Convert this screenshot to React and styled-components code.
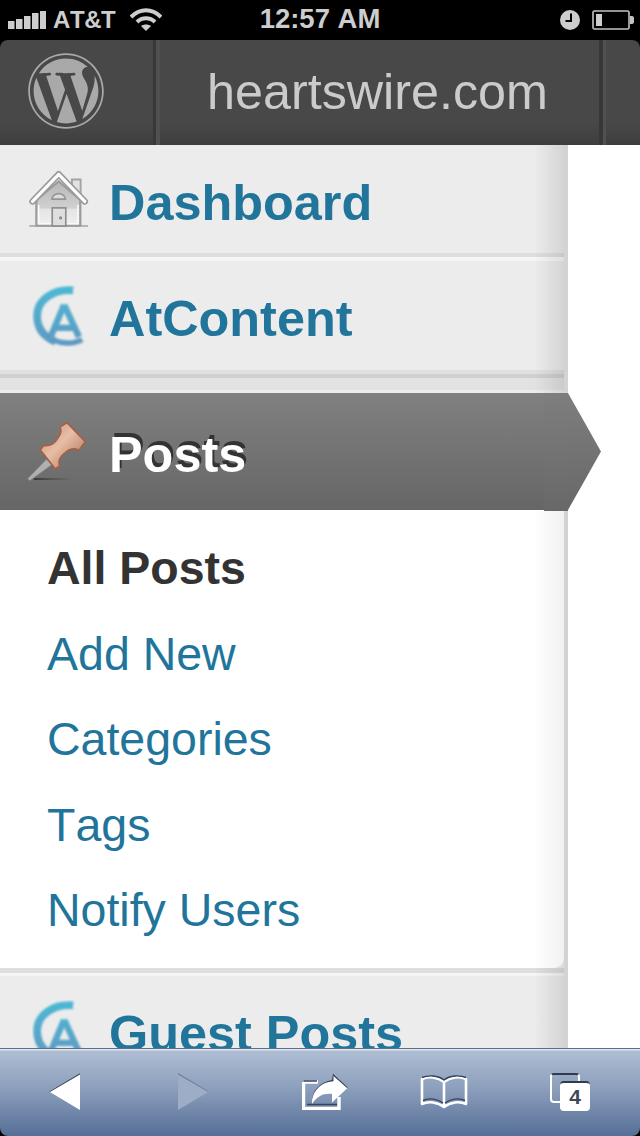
import React from "react";
import styled, { createGlobalStyle } from "styled-components";
import { FaWordpress } from "react-icons/fa";

const Global = createGlobalStyle`
  html, body { margin: 0; padding: 0; background: #000; }
  body { font-family: "Liberation Sans", Arial, sans-serif; font-kerning: none; }
`;

const Page = styled.div`
  width: 640px; height: 1136px; display: flex; flex-direction: column;
  overflow: hidden; background: #000; position: relative;
`;

const StatusBar = styled.div`
  height: 40px; flex: none; display: grid; grid-template-columns: 1fr auto 1fr; align-items: center;
  padding: 0 6px 0 8px; background: #000; color: #cdcdcd; box-sizing: border-box;
`;
const StatusLeft = styled.div`display: flex; align-items: center;`;
const StatusRight = styled.div`display: flex; align-items: center; justify-content: flex-end; gap: 12px;`;
const Carrier = styled.span`font-size: 24px; font-weight: 700; margin: 0 15px 0 7px; letter-spacing: -0.4px;`;
const Clock = styled.span`font-size: 27.5px; font-weight: 700; position: relative; left: -1px; top: -1px;`;

const Header = styled.header`
  height: 105px; flex: none; display: flex; border-radius: 8px 8px 0 0; overflow: hidden;
  background: linear-gradient(#484848 0, #484848 80%, #3d3d3d 100%);
`;
const LogoCell = styled.div`
  width: 153px; flex: none; display: flex; align-items: center; justify-content: center;
  color: #a9a9a9; padding-right: 21px; padding-bottom: 4px; box-sizing: border-box;
`;
const Sep = styled.div`
  width: 7px; flex: none; background: linear-gradient(90deg, #373737 0, #373737 50%, #505050 50%, #505050 100%);
`;
const Site = styled.div`
  flex: 1; display: flex; align-items: center; justify-content: center;
  font-size: 50.3px; color: #cbcbcb; padding-right: 4px; padding-bottom: 2px;
`;
const EndCell = styled.div`width: 34px; flex: none;`;

const Body = styled.div`flex: 1; min-height: 0; display: flex; background: #fff; overflow: hidden;`;
const Sidebar = styled.nav`
  width: 568px; flex: none; box-sizing: border-box; border-right: 4px solid #d3d3d3;
  background: #fff; display: flex; flex-direction: column;
`;

const fade = "linear-gradient(90deg, rgba(0,0,0,0) 0, rgba(0,0,0,0) calc(100% - 30px), rgba(0,0,0,.1) 100%)";

const Row = styled.div`
  height: ${p => p.$h}px; flex: none; box-sizing: border-box; display: flex; align-items: center;
  padding-left: 28px; gap: 19px; position: relative;
  background: ${fade}, #ececec;
`;
const RowLabel = styled.span`font-size: 50.4px; font-weight: 700; color: #21759b; position: relative; top: ${p => p.$top || 0}px;`;
const Rule = styled.div`height: ${p => p.$h}px; flex: none; background: ${fade}, ${p => p.$c};`;

const ActiveRow = styled.div`
  height: 117px; flex: none; margin-right: -4px; display: flex; align-items: center;
  padding-left: 27px; gap: 22px; position: relative;
  background: linear-gradient(#808080, #666);
  &::before {
    content: ""; position: absolute; right: 0; top: 0; width: 24px; height: 118px;
    background: linear-gradient(#7e7e7e, #686868);
  }
  &::after {
    content: ""; position: absolute; left: 100%; top: 0; width: 33px; height: 117px;
    background: linear-gradient(#7e7e7e, #686868);
    clip-path: polygon(0 0, 100% 50%, 0 100%);
  }
`;
const ActiveLabel = styled.span`
  font-size: 50.4px; font-weight: 700; color: #fff; text-shadow: 2px -4px 0 #333; position: relative; top: 3px;
`;

const Submenu = styled.ul`
  list-style: none; margin: 0; padding: 16px 0 0 47px; height: 458px; flex: none; box-sizing: border-box;
  border-bottom-right-radius: 10px;
  background: linear-gradient(90deg, #fff 0, #fff calc(100% - 30px), #f1f1f1 100%);
`;
const SubItem = styled.li`
  height: 85.5px; line-height: 85.5px; font-size: 46.5px;
  font-weight: ${p => p.$current ? 700 : 400}; color: ${p => p.$current ? "#333" : "#21759b"};
`;
const SubWrap = styled.div`flex: none; background: #ddd;`;

const Toolbar = styled.footer`
  height: 88px; flex: none; box-sizing: border-box; display: flex; align-items: center; padding: 0 0 2px 49px;
  border-top: 1px solid #5c6f8c; border-radius: 0 0 8px 8px; position: relative;
  background: linear-gradient(#dfe5ed 0, #dfe5ed 1px, #aebdd3 2px, #8c9fbc 45%, #566f97 100%);
`;
const NavIcon = styled.span`display: flex; flex: none; margin-left: ${p => p.$gap || 0}px;`;
const Tabs = styled.span`display: block; width: 40px; height: 38px; position: relative; flex: none; margin-left: 82px;`;
const TabBack = styled.span`
  position: absolute; left: 0; top: 0; width: 30px; height: 30px; box-sizing: border-box;
  border: 2.5px solid #fff; border-top-color: #2f3b4f; border-radius: 4px;
`;
const TabBadge = styled.span`
  position: absolute; left: 10px; top: 8px; width: 30px; height: 30px; background: #fff; border-radius: 4px;
  border-top: 2px solid #2f3b4f; box-sizing: border-box; color: #3d4759; font-size: 21px; font-weight: 700;
  display: flex; align-items: center; justify-content: center;
`;

const Signal = () => (
  <svg width="38" height="18" viewBox="0 0 38 18" fill="#cdcdcd">
    <rect x="0" y="10" width="6.5" height="8" /><rect x="8" y="8" width="6.5" height="10" />
    <rect x="16" y="5" width="6.5" height="13" /><rect x="24" y="2" width="6.5" height="16" />
    <rect x="32" y="0" width="6" height="18" />
  </svg>
);
const Wifi = () => (
  <svg width="32" height="24" viewBox="0 0 32 24" fill="none" stroke="#cdcdcd" strokeWidth="4">
    <path d="M1 9 C10 0 22 0 31 9" /><path d="M7 14 C12 9 20 9 25 14" />
    <path d="M16 23 L11 18 C14 16 18 16 21 18 Z" fill="#cdcdcd" stroke="none" />
  </svg>
);
const ClockIcon = () => (
  <svg width="20" height="20" viewBox="0 0 20 20">
    <circle cx="10" cy="10" r="10" fill="#cdcdcd" />
    <path d="M11 3.5 V11 H5.5" fill="none" stroke="#000" strokeWidth="2" />
  </svg>
);
const Battery = () => (
  <svg width="42" height="20" viewBox="0 0 42 20" fill="none">
    <rect x="1" y="1" width="36" height="18" rx="1.5" stroke="#c4c4c4" strokeWidth="1.6" />
    <path d="M38 6 h2 a2 2 0 0 1 2 2 v4 a2 2 0 0 1 -2 2 h-2 z" fill="#c4c4c4" />
    <rect x="4" y="4" width="6" height="12" fill="#cdcdcd" />
  </svg>
);

const House = () => (
  <svg width="62" height="60" viewBox="80 70 192 185" style={{ display: "block", flex: "none" }}>
    <defs>
      <linearGradient id="hw" x1="0" y1="0" x2="0" y2="1">
        <stop offset="0" stopColor="#b8b8b8" /><stop offset=".6" stopColor="#d0d0d0" /><stop offset=".63" stopColor="#e4e4e4" /><stop offset="1" stopColor="#f0f0f0" />
      </linearGradient>
      <filter id="hb"><feGaussianBlur stdDeviation="1.2" /></filter>
    </defs>
    <g filter="url(#hb)">
      <rect x="84" y="243" width="182" height="6" fill="#b4b4b4" />
      <path d="M216 102 H243 V150 H216 Z" fill="#e2e2e2" stroke="#a4a4a4" strokeWidth="6" />
      <path d="M106 165 L175 108 L242 165 V245 H106 Z" fill="url(#hw)" stroke="#9c9c9c" strokeWidth="7" />
      <path d="M113 180 V239 H235 V180" fill="none" stroke="#fafafa" strokeWidth="5" />
      <path d="M94 170 L175 86 L256 170" fill="none" stroke="#9a9a9a" strokeWidth="20" strokeLinejoin="round" strokeLinecap="round" />
      <path d="M94 170 L175 86 L256 170" fill="none" stroke="#fdfdfd" strokeWidth="10" strokeLinejoin="round" strokeLinecap="round" />
      <path d="M154 163 A21 17 0 0 1 196 163 Z" fill="#dcdcdc" stroke="#959595" strokeWidth="5" />
      <rect x="155" y="190" width="42" height="56" fill="#dedede" stroke="#8c8c8c" strokeWidth="5" />
      <circle cx="181" cy="221" r="5" fill="#8c8c8c" />
    </g>
  </svg>
);
const AtIcon = ({ id }) => (
  <svg width="54" height="62" viewBox="92 430 168 190" style={{ display: "block", flex: "none", margin: "0 4px 0 4px" }}>
    <defs>
      <linearGradient id={id} gradientUnits="userSpaceOnUse" x1="0" y1="435" x2="0" y2="615">
        <stop offset="0" stopColor="#4db8d4" /><stop offset="1" stopColor="#5f99c2" />
      </linearGradient>
      <filter id={id + "b"} x="-20%" y="-20%" width="140%" height="140%"><feGaussianBlur stdDeviation="3.5" /></filter>
    </defs>
    <g fill="none" stroke={`url(#${id})`} filter={`url(#${id}b)`}>
      <path d="M220 445 C165 440 108 470 108 525 C108 565 130 590 165 605" strokeWidth="24" />
      <path d="M192 490 L152 585 M192 490 L238 590 M160 562 H222" strokeWidth="20" />
      <path d="M150 592 C175 615 225 612 248 598" strokeWidth="17" />
    </g>
  </svg>
);
const Pin = () => (
  <svg width="60" height="63" viewBox="80 150 180 189" style={{ display: "block", flex: "none" }}>
    <defs>
      <linearGradient id="pg" x1="0" y1="0" x2="1" y2="1">
        <stop offset="0" stopColor="#c98a6c" /><stop offset=".45" stopColor="#e8bda6" /><stop offset="1" stopColor="#a9674c" />
      </linearGradient>
      <linearGradient id="ps" x1="0" y1="0" x2="1" y2="0">
        <stop offset="0" stopColor="#333" stopOpacity=".9" /><stop offset="1" stopColor="#444" stopOpacity="0" />
      </linearGradient>
      <filter id="pb"><feGaussianBlur stdDeviation="1" /></filter>
    </defs>
    <g filter="url(#pb)">
      <rect x="100" y="324" width="118" height="6" rx="3" fill="url(#ps)" />
      <path d="M138 268 L82 326 L88 332 L158 282 Z" fill="#b0b0b0" stroke="#7c7c7c" strokeWidth="2" />
      <path d="M200 158 L255 215 L236 241 C222 232 205 238 195 248 C182 258 172 268 178 288 L165 297 L120 240 L130 226 C150 230 165 218 172 205 C182 192 186 182 178 172 Z"
        fill="url(#pg)" stroke="#a0604a" strokeWidth="5" strokeLinejoin="round" />
    </g>
  </svg>
);

const Back = () => (
  <svg width="31" height="37" viewBox="0 0 31 37">
    <path d="M31 0 L0 18.5 L31 37 Z" fill="#fff" />
    <path d="M31 0 L0 18.5 L1 19 L31 1.5 Z" fill="#3a465c" />
  </svg>
);
const Forward = () => (
  <svg width="31" height="37" viewBox="0 0 31 37">
    <path d="M0 0 L31 18.5 L0 37 Z" fill="#9dadc6" />
    <path d="M0 0 L31 18.5 L30 19 L0 1.5 Z" fill="#6f809c" />
  </svg>
);
const Share = () => (
  <svg width="46" height="37" viewBox="0 0 46 37">
    <path d="M1.5 9 H16 M1.5 9 V35.5 H37 V24" fill="none" stroke="#fff" strokeWidth="3.4" />
    <path d="M1.5 8 H15 M5 31.5 H35" fill="none" stroke="#36425a" strokeWidth="1.5" />
    <path d="M31 0.5 L46 14.5 L30 29.5 V21 C22 20 15 23 10 31 C10 18 18 9 31 8.5 Z" fill="#fff" />
    <path d="M31 0.5 L46 14.5 L45 15 L31.5 3 V8 C20 9 12 16 10 27 C11 16 19 9 30 7 Z" fill="#36425a" />
  </svg>
);
const Book = () => (
  <svg width="48" height="34" viewBox="0 0 48 34" fill="none">
    <path d="M24 7 C18 2 8 1 2 4 V29 C8 26 18 27 24 32 C30 27 40 26 46 29 V4 C40 1 30 2 24 7 Z M24 7 V32" stroke="#fff" strokeWidth="2.6" strokeLinejoin="round" />
    <path d="M2 2.5 C8 0 18 0 24 5 C30 0 40 0 46 2.5 M3 25.5 C9 22.5 18 24 23 28 M45 25.5 C39 22.5 30 24 25 28" stroke="#36425a" strokeWidth="1.4" />
  </svg>
);

export default function App() {
  return (
    <Page>
      <Global />
      <StatusBar>
        <StatusLeft>
          <Signal />
          <Carrier>AT&amp;T</Carrier>
          <Wifi />
        </StatusLeft>
        <Clock>12:57 AM</Clock>
        <StatusRight>
          <ClockIcon />
          <Battery />
        </StatusRight>
      </StatusBar>
      <Header>
        <LogoCell><FaWordpress size={78} /></LogoCell>
        <Sep />
        <Site>heartswire.com</Site>
        <Sep />
        <EndCell />
      </Header>
      <Body>
        <Sidebar>
          <Row $h={108}><House /><RowLabel $top={3}>Dashboard</RowLabel></Row>
          <Rule $h={4} $c="#dedede" />
          <Rule $h={4} $c="#f6f6f6" />
          <Row $h={109}><AtIcon id="a1" /><RowLabel $top={3}>AtContent</RowLabel></Row>
          <Rule $h={4} $c="#e0e0e0" />
          <Rule $h={4} $c="#d0d0d0" />
          <Rule $h={12} $c="#e2e2e2" />
          <Rule $h={3} $c="#ececec" />
          <ActiveRow><Pin /><ActiveLabel>Posts</ActiveLabel></ActiveRow>
          <SubWrap>
            <Submenu>
              <SubItem $current>All Posts</SubItem>
              <SubItem>Add New</SubItem>
              <SubItem>Categories</SubItem>
              <SubItem>Tags</SubItem>
              <SubItem>Notify Users</SubItem>
            </Submenu>
          </SubWrap>
          <Rule $h={5} $c="#dedede" />
          <Rule $h={3} $c="#f6f6f6" />
          <Row $h={109}><AtIcon id="a2" /><RowLabel $top={3}>Guest Posts</RowLabel></Row>
        </Sidebar>
      </Body>
      <Toolbar>
        <NavIcon><Back /></NavIcon>
        <NavIcon $gap={98}><Forward /></NavIcon>
        <NavIcon $gap={93}><Share /></NavIcon>
        <NavIcon $gap={72}><Book /></NavIcon>
        <Tabs><TabBack /><TabBadge>4</TabBadge></Tabs>
      </Toolbar>
    </Page>
  );
}
